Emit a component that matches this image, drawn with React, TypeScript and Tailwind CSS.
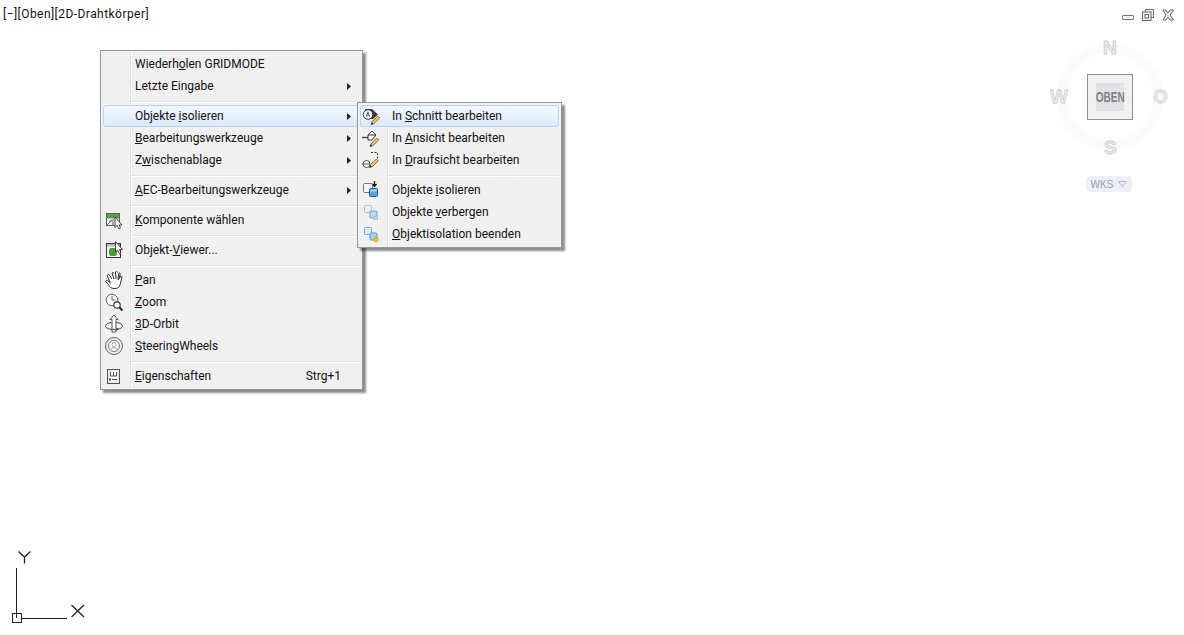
import React from 'react';

const S = ({ children, w = 20, h = 20, vb }: { children: React.ReactNode; w?: number; h?: number; vb?: string }) => (
  <svg width={w} height={h} viewBox={vb ?? `0 0 ${w} ${h}`} fill="none" className="block">{children}</svg>
);

const Pencil = ({ x = 0, y = 0 }: { x?: number; y?: number }) => (
  <g transform={`translate(${x} ${y})`}>
    <path d="M0.5 9.5 L1.5 6.8 L7.2 1 L9.2 3 L3.3 8.7 Z" fill="#f7c550" stroke="#444" strokeWidth="0.7" />
    <path d="M0.5 9.5 L1.3 7.2 L2.9 8.8 Z" fill="#222" />
  </g>
);

const IconKomponente = () => (
  <S>
    <rect x="2.5" y="3.5" width="13" height="12" fill="#eef2ec" stroke="#4a6a4a" />
    <rect x="3" y="4" width="12" height="4.5" fill="#5f9a52" />
    <path d="M3 15 L8 10 M5 11 H8 M9 9 V15" stroke="#666" />
    <path d="M11 7 V17.5 L13 15.5 L15 19 L16.5 18 L15 15 H18 Z" fill="#fff" stroke="#333" strokeWidth="0.9" />
  </S>
);
const IconViewer = () => (
  <S>
    <rect x="2.5" y="3.5" width="14" height="14" fill="#fff" stroke="#333" />
    <rect x="3" y="4" width="13" height="2.5" fill="#bbb" />
    <rect x="5" y="8" width="8" height="8" rx="2" fill="#4f9a3f" />
    <path d="M11.5 1.5 V12 L13.5 10 L15.5 13.5 L17 12.5 L15.5 9.5 H18.5 Z" fill="#fff" stroke="#333" strokeWidth="0.9" />
  </S>
);
const IconPan = () => (
  <S>
    <path d="M5 4.5 L8 9 M8 3 L10 9 M11.5 2 L12 9 M15 3 L14 9.5 M14 10 L17 6 C18 6 18 7 17.8 8 L16 15 C15 18 13 18.5 10 18.5 C7 18.5 6 17 5 15.5 L1.8 11.5 C1.5 10.5 2.8 10 3.6 10.5 L6.5 13 L3.2 6 C3 5 4.3 4.2 5 4.5 M8 3 C8.5 2 9.5 2.5 10 3.5 M11.5 2 C12.5 1 13.5 1.5 13.5 2.5 M15 3 C15.5 2.5 16.5 3 16.2 4.2 L15 8.5" stroke="#333" strokeWidth="1" fill="#fff" strokeLinejoin="round" />
  </S>
);
const IconZoom = () => (
  <S>
    <circle cx="8" cy="8" r="5.8" fill="#f8f8f8" stroke="#666" />
    <path d="M8 4 V8 H11.5" stroke="#666" />
    <circle cx="13" cy="13" r="3.2" fill="#fff" stroke="#333" strokeWidth="1.2" />
    <path d="M15.5 15.5 L18.5 18.5" stroke="#222" strokeWidth="2" />
  </S>
);
const IconOrbit = () => (
  <S>
    <path d="M10 1 L14 5.5 H12 V18 H8 V5.5 H6 Z" fill="#fff" stroke="#555" />
    <path d="M7.5 8.5 C3.5 9 1.5 10.5 1.5 12 C1.5 14.5 6 15.5 10 15.5 C14 15.5 18.5 14.5 18.5 12 C18.5 10.5 16.5 9 12.5 8.5" stroke="#444" />
    <path d="M12 13.5 L15 15 L12 17 Z" fill="#444" />
  </S>
);
const IconWheel = () => (
  <S>
    <circle cx="10" cy="10" r="8.5" fill="#ececec" stroke="#666" />
    <circle cx="10" cy="10" r="5.5" fill="#fff" stroke="#777" />
    <path d="M7 13.5 C7 11 13 11 13 13.5" stroke="#999" />
    <circle cx="10" cy="8.5" r="2" stroke="#aaa" />
  </S>
);
const IconProps = () => (
  <S>
    <rect x="3.5" y="3.5" width="12" height="14" fill="#e8e8e8" stroke="#555" />
    <rect x="5.5" y="5.5" width="8" height="10" fill="#fff" />
    <path d="M6.5 6 V10 H12.5 V6 M9.5 6 V10" stroke="#444" />
    <path d="M8 13.5 H13 M6 12 V15 M5 13.5 H7" stroke="#444" />
  </S>
);
const IconSchnitt = () => (
  <S>
    <path d="M4 3 H11 L17 8.5 L12 13 H7 Z" fill="#3a3a3a" />
    <circle cx="7" cy="8.5" r="4.8" fill="#f4f4f4" stroke="#333" />
    <path d="M5.3 10.8 L7 6 L8.7 10.8 M5.9 9.3 H8.1" stroke="#333" strokeWidth="0.7" />
    <Pencil x={9.5} y={9} />
  </S>
);
const IconAnsicht = () => (
  <S>
    <path d="M1 9.5 H7" stroke="#333" strokeWidth="1.2" />
    <path d="M7 7 L11 3 L15 7 L11 12 L7 12 Z" fill="#fff" stroke="#333" />
    <path d="M7 7 H15" stroke="#333" />
    <Pencil x={8.5} y={9} />
  </S>
);
const IconDraufsicht = () => (
  <S>
    <path d="M10 2.5 H16.5 V9" stroke="#333" strokeDasharray="2 1.5" />
    <circle cx="5.5" cy="14" r="3.5" fill="#fff" stroke="#555" />
    <path d="M1 14 H9" stroke="#555" />
    <Pencil x={8} y={8} />
  </S>
);
const IconIsolate = () => (
  <S>
    <rect x="2.5" y="3.5" width="9" height="9" rx="1" fill="#f4f4f4" stroke="#777" />
    <rect x="8.5" y="8.5" width="8" height="8" rx="1" fill="#5aa5de" stroke="#1d5d95" />
    <rect x="9.5" y="9.5" width="6" height="2" fill="#a9d4f2" />
    <path d="M13.5 1 V5 M11.5 3.8 L13.5 6.5 L15.5 3.8" stroke="#111" strokeWidth="1.3" />
  </S>
);
const IconHide = () => (
  <S>
    <rect x="3.5" y="3.5" width="7" height="7" rx="1" fill="#eee" stroke="#bbb" />
    <rect x="9" y="9" width="7" height="7" rx="1" fill="#bcdcf4" stroke="#6fa3cf" />
    <rect x="13" y="14" width="3.5" height="3.5" fill="#d8d8d8" stroke="#aaa" strokeWidth="0.7" />
  </S>
);
const IconEnd = () => (
  <S>
    <rect x="3.5" y="3.5" width="7" height="7" rx="1" fill="#dcebf8" stroke="#6fa3cf" />
    <rect x="9" y="9" width="7" height="7" rx="1" fill="#a9d2f0" stroke="#5c96c8" />
    <circle cx="15" cy="15.5" r="2.2" fill="#f6c02c" stroke="#c98f12" strokeWidth="0.7" />
  </S>
);

type Row = { icon?: React.ReactNode; label: React.ReactNode; arrow?: boolean; active?: boolean; shortcut?: string } | 'sep';

const MenuRow = ({ r }: { r: Exclude<Row, 'sep'> }) => (
  <div className="relative flex h-[22px] items-center">
    {r.active && (
      <div className="absolute inset-x-[2px] inset-y-0 rounded-[3px] border border-[#b5d4f8] bg-gradient-to-b from-[#f4f8fe] to-[#dbe9fb]" />
    )}
    <div className="relative flex w-[30px] shrink-0 items-center justify-center pr-[4px]">{r.icon}</div>
    <div className="relative flex-1 pl-[4px] text-[12px] leading-[20px] text-[#111]">{r.label}</div>
    {r.shortcut && <div className="relative mr-[21px] text-[12px] leading-[20px] text-[#111]">{r.shortcut}</div>}
    {r.arrow && (
      <svg width="4" height="7" viewBox="0 0 4 7" className="relative mr-[11px]">
        <path d="M0 0 L4 3.5 L0 7 Z" fill="#222" />
      </svg>
    )}
  </div>
);

const Menu = ({ rows, className }: { rows: Row[]; className: string }) => (
  <div
    className={`absolute border border-[#979797] bg-[#f0f0f0] py-[2px] shadow-[3px_3px_2px_rgba(0,0,0,0.45)] ${className}`}
  >
    <div className="absolute bottom-[1px] left-[29px] top-[1px] w-[1px] bg-[#e2e3e3]" />
    <div className="absolute bottom-[1px] left-[30px] top-[1px] w-[1px] bg-white" />
    {rows.map((r, i) =>
      r === 'sep' ? (
        <div key={i} className="relative flex h-[8px] flex-col pl-[30px] pr-[2px] pt-[4px]">
          <div className="h-[1px] bg-[#e2e3e3]" />
          <div className="h-[1px] bg-white" />
        </div>
      ) : (
        <MenuRow key={i} r={r} />
      ),
    )}
  </div>
);

const main: Row[] = [
  { label: <>Wiederh<u>o</u>len GRIDMODE</> },
  { label: 'Letzte Eingabe', arrow: true },
  'sep',
  { label: <>Objekte <u>i</u>solieren</>, arrow: true, active: true },
  { label: <><u>B</u>earbeitungswerkzeuge</>, arrow: true },
  { label: <>Z<u>w</u>ischenablage</>, arrow: true },
  'sep',
  { label: <><u>A</u>EC-Bearbeitungswerkzeuge</>, arrow: true },
  'sep',
  { label: <><u>K</u>omponente wählen</>, icon: <IconKomponente /> },
  'sep',
  { label: <>Objekt-<u>V</u>iewer...</>, icon: <IconViewer /> },
  'sep',
  { label: <><u>P</u>an</>, icon: <IconPan /> },
  { label: <><u>Z</u>oom</>, icon: <IconZoom /> },
  { label: <><u>3</u>D-Orbit</>, icon: <IconOrbit /> },
  { label: <><u>S</u>teeringWheels</>, icon: <IconWheel /> },
  'sep',
  { label: <><u>E</u>igenschaften</>, icon: <IconProps />, shortcut: 'Strg+1' },
];

const sub: Row[] = [
  { label: <>In <u>S</u>chnitt bearbeiten</>, icon: <IconSchnitt />, active: true },
  { label: <>In <u>A</u>nsicht bearbeiten</>, icon: <IconAnsicht /> },
  { label: <>In <u>D</u>raufsicht bearbeiten</>, icon: <IconDraufsicht /> },
  'sep',
  { label: <>Objekte <u>i</u>solieren</>, icon: <IconIsolate /> },
  { label: <>Objekte <u>v</u>erbergen</>, icon: <IconHide /> },
  { label: <><u>O</u>bjektisolation beenden</>, icon: <IconEnd /> },
];

const Compass = () => (
  <div className="absolute left-[1050px] top-[34px] h-[165px] w-[120px] font-['Liberation_Sans',sans-serif]">
    <div className="absolute left-[7px] top-[10px] h-[106px] w-[106px] rounded-full border-[9px] border-[#fbfbfb]" />
    {[
      ['N', 'left-[53px] top-[4px]'],
      ['W', 'left-[0px] top-[53px]'],
      ['O', 'left-[103px] top-[53px]'],
      ['S', 'left-[54px] top-[104px]'],
    ].map(([l, c]) => (
      <span
        key={l}
        className={`absolute ${c} text-[19px] font-bold leading-[20px] text-[#eeeeee] [-webkit-text-stroke:0.8px_#cccccc]`}
      >
        {l}
      </span>
    ))}
    <div className="absolute left-[37px] top-[40px] flex h-[46px] w-[46px] items-center justify-center border border-[#8f8f8f] bg-[#f1f1f1]">
      <div className="flex h-[28px] w-[28px] items-center justify-center bg-[#e2e2e6]">
        <span className="inline-block scale-x-[0.72] text-[14px] font-bold text-[#80808a]">OBEN</span>
      </div>
    </div>
    <div className="absolute left-[36px] top-[142px] flex h-[16px] w-[46px] items-center justify-center gap-[5px] rounded-[4px] bg-[#eeeef6] text-[10px] text-[#9a9aa2]">
      WKS
      <svg width="9" height="6" viewBox="0 0 9 6"><path d="M0.5 0.5 H8.5 L4.5 5.5 Z" fill="none" stroke="#b4b4bc" /></svg>
    </div>
  </div>
);

const WindowButtons = () => (
  <div className="absolute right-[9px] top-[8px] flex items-center gap-[6px]">
    <svg width="14" height="14" viewBox="0 0 14 14"><rect x="1.5" y="7.5" width="11" height="4" rx="0.5" fill="#f4f4f4" stroke="#777" /></svg>
    <svg width="14" height="14" viewBox="0 0 14 14"><rect x="4.5" y="1.5" width="8" height="8" fill="#eee" stroke="#777" /><rect x="1.5" y="4" width="8.5" height="8.5" fill="#f6f6f6" stroke="#666" /><rect x="4" y="6.5" width="3.5" height="3.5" fill="#fff" stroke="#666" /></svg>
    <svg width="14" height="14" viewBox="0 0 14 14"><path d="M2 2 H5 L7 5 L9 2 H12.5 L9 7 L12.5 12 H9 L7 9 L5 12 H2 L5 7 Z" fill="#e8e8e8" stroke="#666" /></svg>
  </div>
);

const Ucs = () => (
  <svg className="absolute left-0 top-[540px]" width="100" height="95" viewBox="0 0 100 95" fill="none" stroke="#222">
    <path d="M18.5 11.5 L24.5 17 L30.5 11.5 M24.5 17 V23.5" strokeWidth="1.3" />
    <path d="M16.5 28 V78" />
    <rect x="12.5" y="73.5" width="9" height="9" />
    <path d="M21 78.5 H67" />
    <path d="M71.5 65 L84 77 M84 65 L71.5 77" strokeWidth="1.3" />
  </svg>
);

export default function App() {
  return (
    <div className="relative h-[635px] w-[1184px] overflow-hidden bg-white font-['Roboto',sans-serif]">
      <div className="px-[3px] pt-[5px] text-[12px] leading-[18px] tracking-[0.45px] text-[#111]">[−][Oben][2D-Drahtkörper]</div>
      <WindowButtons />
      <Compass />
      <Ucs />
      <Menu rows={main} className="left-[100px] top-[50px] w-[263px]" />
      <Menu rows={sub} className="left-[357px] top-[102px] w-[205px]" />
    </div>
  );
}
